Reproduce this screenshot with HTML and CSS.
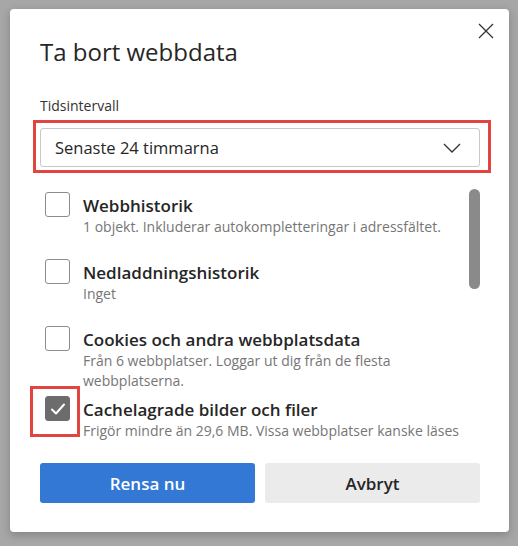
FILE: index.html
```html
<!DOCTYPE html>
<html lang="sv">
<head>
<meta charset="utf-8">
<title>Ta bort webbdata</title>
<link rel="stylesheet" href="styles.css">
</head>
<body>
<div class="dialog">
  <button class="close" aria-label="Stäng">
    <svg width="16" height="16" viewBox="0 0 16 16"><path d="M1 1 L15 15 M15 1 L1 15" stroke="#333" stroke-width="1.3" fill="none"/></svg>
  </button>
  <h1 class="title">Ta bort webbdata</h1>
  <div class="field-label">Tidsintervall</div>
  <div class="select">
    <span class="select-text">Senaste 24 timmarna</span>
    <svg class="chevron" width="18" height="10" viewBox="0 0 18 10"><path d="M1 1 L9 9 L17 1" stroke="#333" stroke-width="1.3" fill="none"/></svg>
  </div>
  <div class="list">
    <div class="item">
      <span class="box"></span>
      <div class="text">
        <div class="label">Webbhistorik</div>
        <div class="sub">1 objekt. Inkluderar autokompletteringar i adressfältet.</div>
      </div>
    </div>
    <div class="item">
      <span class="box"></span>
      <div class="text">
        <div class="label">Nedladdningshistorik</div>
        <div class="sub">Inget</div>
      </div>
    </div>
    <div class="item">
      <span class="box"></span>
      <div class="text">
        <div class="label">Cookies och andra webbplatsdata</div>
        <div class="sub">Från 6 webbplatser. Loggar ut dig från de flesta webbplatserna.</div>
      </div>
    </div>
    <div class="item">
      <span class="box checked">
        <svg width="16" height="14" viewBox="0 0 16 14"><path d="M2 7.5 L6 11.5 L14 2.5" stroke="#fff" stroke-width="2" fill="none" stroke-linecap="round" stroke-linejoin="round"/></svg>
      </span>
      <div class="text">
        <div class="label">Cachelagrade bilder och filer</div>
        <div class="sub">Frigör mindre än 29,6 MB. Vissa webbplatser kanske läses</div>
      </div>
    </div>
  </div>
  <div class="scrollbar"></div>
  <div class="buttons">
    <button class="btn primary">Rensa nu</button>
    <button class="btn secondary">Avbryt</button>
  </div>
  <div class="mark mark-select"></div>
  <div class="mark mark-check"></div>
</div>
</body>
</html>
```
FILE: styles.css
```css
html, body {
  margin: 0;
  padding: 0;
}
body {
  background: #a7a7a7;
  font-family: "Open Sans", "Noto Sans", sans-serif;
  color: #1f1f1f;
  height: 546px;
  overflow: hidden;
}
.dialog {
  position: relative;
  margin: 9px 0 0 10px;
  width: 499px;
  height: 523px;
  box-sizing: border-box;
  padding: 0 29px 0 30px;
  background: #fff;
  border-radius: 4px;
  box-shadow: 0 3px 10px rgba(0, 0, 0, 0.22);
}
.close {
  position: absolute;
  top: 14px;
  right: 15px;
  width: 16px;
  height: 16px;
  padding: 0;
  border: 0;
  background: none;
  display: flex;
}
.title {
  margin: 0;
  padding-top: 26px;
  font-size: 24px;
  font-weight: 400;
  line-height: 34px;
  color: #262626;
}
.field-label {
  margin-top: 27px;
  font-size: 14px;
  line-height: 20px;
  color: #333;
}
.select {
  margin-top: 12px;
  height: 39px;
  box-sizing: border-box;
  border: 1px solid #c8c8c8;
  border-radius: 3px;
  display: flex;
  align-items: center;
  justify-content: space-between;
  padding: 0 18px 0 14px;
}
.select-text {
  font-size: 16.5px;
  color: #262626;
}
.list {
  margin-top: 25px;
  height: 252px;
  overflow: hidden;
  display: flex;
  flex-direction: column;
}
.item {
  display: flex;
  min-height: 67px;
  padding-bottom: 5px;
  box-sizing: border-box;
  flex-shrink: 0;
}
.box {
  flex: none;
  width: 25px;
  height: 25px;
  box-sizing: border-box;
  margin-left: 5px;
  border: 1px solid #8c8c8c;
  border-radius: 3px;
  display: flex;
  align-items: center;
  justify-content: center;
}
.box.checked {
  background: #6c6c6c;
  border-color: #6c6c6c;
}
.text {
  margin-left: 13px;
  padding-top: 3px;
  width: 385px;
}
.label {
  font-size: 17px;
  font-weight: 600;
  line-height: 22px;
  color: #262626;
}
.sub {
  font-size: 14px;
  line-height: 20px;
  color: #767676;
}
.scrollbar {
  position: absolute;
  left: 459px;
  top: 180px;
  width: 11px;
  height: 100px;
  border-radius: 6px;
  background: #8a8a8a;
}
.buttons {
  margin-top: 19px;
  display: flex;
  gap: 10px;
}
.btn {
  flex: 1;
  height: 40px;
  border: 0;
  border-radius: 3px;
  font-family: inherit;
  font-size: 17px;
  font-weight: 600;
}
.primary {
  background: #3278d4;
  color: #fff;
}
.secondary {
  background: #ebebeb;
  color: #262626;
}
.mark {
  position: absolute;
  border: 3px solid #e2453f;
  box-sizing: border-box;
}
.mark-select {
  left: 23px;
  top: 111px;
  width: 458px;
  height: 53px;
}
.mark-check {
  left: 20px;
  top: 377px;
  width: 50px;
  height: 51px;
}
```
